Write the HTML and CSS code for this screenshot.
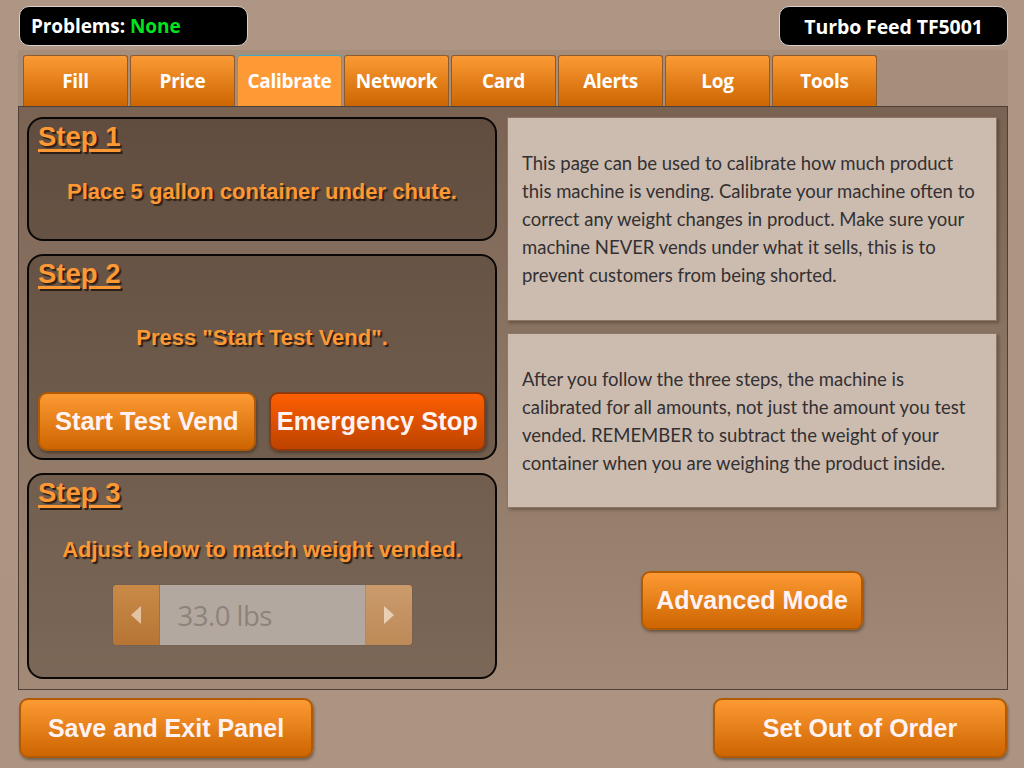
FILE: index.html
```html
<!DOCTYPE html>
<html>
<head>
<meta charset="utf-8">
<link rel="stylesheet" href="styles.css">
</head>
<body>
<div class="screen">
  <header class="topbar">
    <div class="pill">Problems: <span class="ok">None</span></div>
    <div class="pill pill-model">Turbo Feed TF5001</div>
  </header>

  <div class="frame">
    <nav class="tabs">
      <div class="tab">Fill</div>
      <div class="tab">Price</div>
      <div class="tab active">Calibrate</div>
      <div class="tab">Network</div>
      <div class="tab">Card</div>
      <div class="tab">Alerts</div>
      <div class="tab">Log</div>
      <div class="tab">Tools</div>
    </nav>

    <main class="panel">
      <section class="steps">
        <div class="step step-1">
          <h2 class="step-title">Step 1</h2>
          <p class="step-text">Place 5 gallon container under chute.</p>
        </div>
        <div class="step step-2">
          <h2 class="step-title">Step 2</h2>
          <p class="step-text">Press "Start Test Vend".</p>
          <div class="step-buttons">
            <button class="btn btn-orange btn-step">Start Test Vend</button>
            <button class="btn btn-red btn-step">Emergency Stop</button>
          </div>
        </div>
        <div class="step step-3">
          <h2 class="step-title">Step 3</h2>
          <p class="step-text">Adjust below to match weight vended.</p>
          <div class="spinner">
            <div class="spin-btn spin-left">
              <svg width="10" height="18" viewBox="0 0 10 18"><polygon points="10,0 10,18 0,9" fill="#e3c3a2"/></svg>
            </div>
            <div class="spin-value">33.0 lbs</div>
            <div class="spin-btn spin-right">
              <svg width="10" height="18" viewBox="0 0 10 18"><polygon points="0,0 0,18 10,9" fill="#ead0b3"/></svg>
            </div>
          </div>
        </div>
      </section>

      <section class="info">
        <div class="info-box info-1">
          <p>This page can be used to calibrate how much product this machine is vending. Calibrate your machine often to correct any weight changes in product. Make sure your machine NEVER vends under what it sells, this is to prevent customers from being shorted.</p>
        </div>
        <div class="info-box info-2">
          <p>After you follow the three steps, the machine is calibrated for all amounts, not just the amount you test vended. REMEMBER to subtract the weight of your container when you are weighing the product inside.</p>
        </div>
        <div class="advanced-wrap">
          <button class="btn btn-orange btn-advanced">Advanced Mode</button>
        </div>
      </section>
    </main>
  </div>

  <footer class="actions">
    <button class="btn btn-orange btn-footer">Save and Exit Panel</button>
    <button class="btn btn-orange btn-footer">Set Out of Order</button>
  </footer>
</div>
</body>
</html>
```

FILE: styles.css
```css
* { box-sizing: border-box; }

html, body {
  margin: 0;
  padding: 0;
}

body {
  width: 1024px;
  height: 768px;
  overflow: hidden;
  background: linear-gradient(to bottom, #af9684, #ad9482);
  font-family: "Liberation Sans", Arial, sans-serif;
}

.screen {
  width: 1024px;
  height: 768px;
  display: flex;
  flex-direction: column;
}

/* top bar */
.topbar {
  display: flex;
  justify-content: space-between;
  padding: 6px 16px 0 19px;
  height: 50px;
}

.pill {
  width: 229px;
  height: 40px;
  background: #000;
  border: 1px solid #d8d0cc;
  border-radius: 10px;
  color: #fff;
  font-family: "Open Sans", "Noto Sans", sans-serif;
  font-weight: 700;
  font-size: 19px;
  display: flex;
  align-items: center;
  padding-left: 11px;
  letter-spacing: -0.1px;
}

.pill .ok {
  color: #00e51c;
  margin-left: 5px;
}

.pill-model {
  justify-content: center;
  padding-left: 0;
  font-size: 19.5px;
}

/* frame with tabs and panel */
.frame {
  margin-left: 18px;
  width: 990px;
  background: #a68e7c;
  display: flex;
  flex-direction: column;
}

.tabs {
  display: flex;
  gap: 2px;
  padding: 5px 0 0 5px;
  height: 56px;
}

.tab {
  width: 105px;
  height: 51px;
  border: 1px solid #8f5a2c;
  border-bottom: none;
  border-radius: 3px 3px 0 0;
  background: linear-gradient(to bottom, #fb9a34, #cc6602);
  color: #fff;
  font-family: "Open Sans", "Noto Sans", sans-serif;
  font-weight: 700;
  font-size: 19px;
  letter-spacing: -0.3px;
  display: flex;
  align-items: center;
  justify-content: center;
}

.tab.active {
  background: #fd9a36;
  border: 1px solid #3eaac4;
  border-bottom: none;
}

.panel {
  height: 584px;
  border: 1px solid #4f3f34;
  background: linear-gradient(to bottom, #7a6353, #a28a77);
  display: flex;
  padding: 10px 10px 10px 8px;
  gap: 10px;
}

/* steps */
.steps {
  width: 470px;
  display: flex;
  flex-direction: column;
  gap: 13px;
}

.step {
  border: 2px solid #0a0806;
  border-radius: 16px;
  background: rgba(35, 25, 15, 0.3);
  padding: 3px 9px 0 9px;
  display: flex;
  flex-direction: column;
}

.step-1 { height: 124px; }
.step-2 { height: 206px; }
.step-3 { height: 206px; }

.step-title {
  margin: 0;
  font-size: 27.5px;
  font-weight: 700;
  color: #fd9934;
  text-decoration: underline;
  text-decoration-thickness: 3px;
  text-underline-offset: 3px;
  text-shadow: 2px 2px 1px #2e2016;
  line-height: 30px;
  align-self: flex-start;
}

.step-text {
  margin: 0;
  text-align: center;
  font-size: 22px;
  font-weight: 700;
  color: #fd9934;
  text-shadow: 2px 2px 1px #2e2016;
}

.step-1 .step-text { margin-top: 27px; }
.step-2 .step-text { margin-top: 36px; }
.step-3 .step-text { margin-top: 29px; }

.step-buttons {
  display: flex;
  gap: 13px;
  margin-top: 41px;
}

/* buttons */
.btn {
  font-family: "Liberation Sans", Arial, sans-serif;
  font-weight: 700;
  color: #fff2f2;
  border-radius: 9px;
  cursor: pointer;
  box-shadow: 1px 2px 3px rgba(40, 25, 10, 0.45);
  padding: 0;
}

.btn-orange {
  background: linear-gradient(to bottom, #fd9a33, #cd6501);
  border: 2px solid #b05a06;
}

.btn-red {
  background: linear-gradient(to bottom, #fd5f02, #bd4300);
  border: 2px solid #8c3a0e;
}

.btn-step {
  width: 218px;
  height: 59px;
  font-size: 25.5px;
}

/* spinner */
.spinner {
  display: flex;
  align-self: center;
  margin-top: 22px;
  height: 60px;
  width: 299px;
  border-radius: 3px;
  overflow: hidden;
  box-shadow: 0 0 1px rgba(0,0,0,0.4);
}

.spin-btn {
  width: 47px;
  display: flex;
  align-items: center;
  justify-content: center;
}

.spin-left {
  background: linear-gradient(to bottom, #c98a48, #b67534);
  border-right: 1px solid #9d7150;
}

.spin-right {
  background: linear-gradient(to bottom, #cc9b6c, #bd8a58);
  border-left: 1px solid #a78b72;
}

.spin-value {
  flex: 1;
  background: #b3a89f;
  color: #8d837a;
  font-family: "Open Sans", "Noto Sans", sans-serif;
  font-size: 27.5px;
  display: flex;
  align-items: center;
  padding-left: 18px;
  letter-spacing: -0.5px;
}

/* info column */
.info {
  width: 490px;
  display: flex;
  flex-direction: column;
  gap: 12px;
}

.info-box {
  background: #ccbcaf;
  border: 1px solid #8d7766;
  box-shadow: 2px 2px 3px rgba(40, 25, 15, 0.35);
  padding: 0 14px;
  display: flex;
  align-items: center;
}

.info-1 { height: 204px; }
.info-2 { height: 175px; }

.info-box p {
  margin: 0;
  font-family: "Lato", "Open Sans", sans-serif;
  font-size: 18.5px;
  line-height: 28px;
  color: #333033;
}

.advanced-wrap {
  display: flex;
  justify-content: center;
  padding-top: 51px;
}

.btn-advanced {
  width: 222px;
  height: 59px;
  font-size: 25px;
}

/* footer */
.actions {
  display: flex;
  justify-content: space-between;
  padding: 8px 17px 0 19px;
}

.btn-footer {
  width: 294px;
  height: 60px;
  font-size: 25px;
}
```
